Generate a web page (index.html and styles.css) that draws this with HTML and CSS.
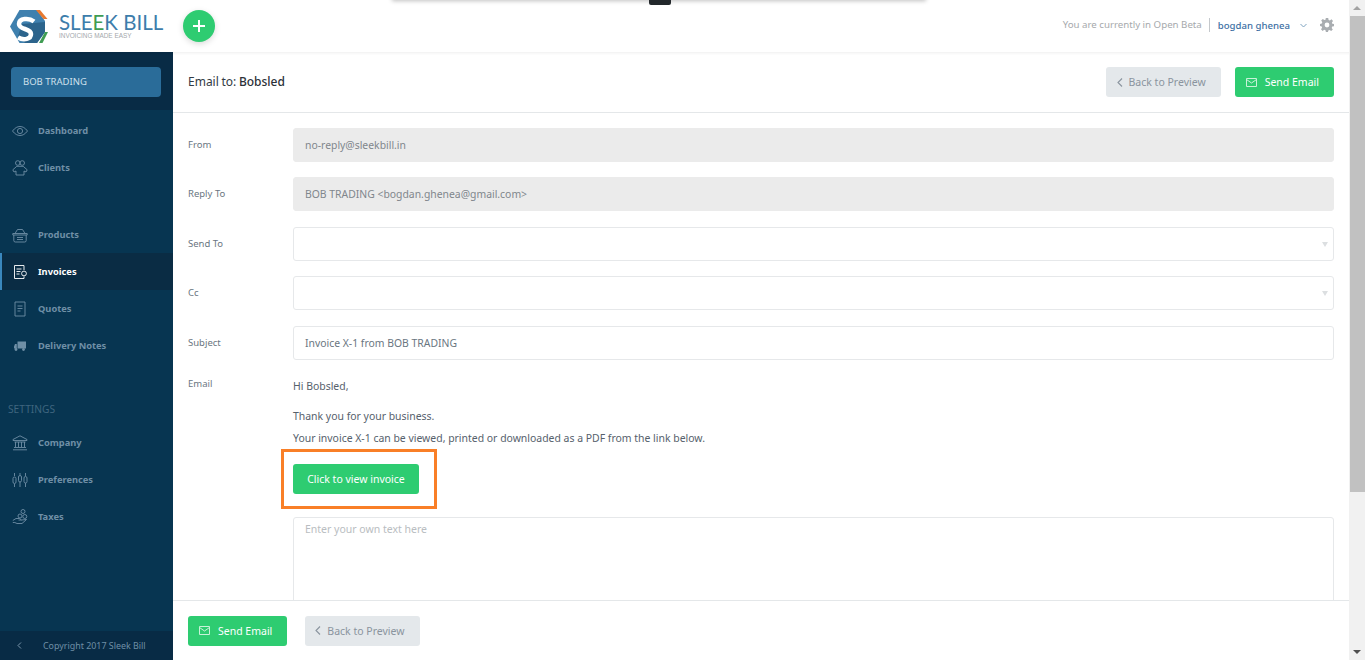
FILE: index.html
```html
<!DOCTYPE html>
<html lang="en">
<head>
<meta charset="utf-8">
<title>Sleek Bill</title>
<link rel="stylesheet" href="styles.css">
</head>
<body>
<div class="page">
  <header class="topbar">
    <div class="logo">
      <svg class="logo-mark" width="38" height="33" viewBox="0 0 38 33">
        <path d="M9.500 0H27L35 11V22L27 33H9.500L0 16.500Z" fill="#3f80ae"/>
        <path d="M12 14 35 12V22L27 33H15L8 26Z" fill="#2c648c"/>
        <path d="M26 0H30L37.500 9H33.500Z" fill="#e8792f"/>
        <path d="M29 33H32.500L38 22H35Z" fill="#3f9c52"/>
        <path d="M24 11.500C19 7.500 9 8 9 14C9 20 21 18 21 24C21 29 14 31 8 27.500" fill="none" stroke="#fff" stroke-width="4.500"/>
      </svg>
      <div class="logo-text">
        <div class="logo-name">SLE<span class="logo-e">E</span>K BILL</div>
        <div class="logo-tag">INVOICING MADE EASY</div>
      </div>
    </div>
    <div class="add-btn"><svg width="14" height="14" viewBox="0 0 14 14"><path d="M7 1V13M1 7H13" stroke="#fff" stroke-width="2"/></svg></div>
    <div class="top-right">
      <span class="beta">You are currently in Open Beta</span>
      <span class="user">bogdan ghenea</span>
      <svg class="user-caret" width="7" height="5" viewBox="0 0 7 5"><path d="M.5 1 3.500 4 6.500 1" fill="none" stroke="#7fa3c0" stroke-width="1"/></svg>
      <svg class="gear" width="14" height="14" viewBox="0 0 14 14"><path fill="#a9adb1" fill-rule="evenodd" d="M5.800 0H8.200L8.600 1.900 9.900 2.400 11.500 1.300 13 3 11.900 4.500 12.300 5.800 14 6V8.200L12.200 8.600 11.700 9.900 12.800 11.500 11.200 13 9.600 11.900 8.300 12.400 8 14H5.900L5.500 12.300 4.200 11.800 2.600 12.900 1 11.300 2.100 9.700 1.700 8.400 0 8V5.900L1.800 5.500 2.300 4.200 1.200 2.600 2.800 1 4.400 2.100 5.500 1.700ZM7 4.600A2.400 2.400 0 1 0 7 9.400 2.400 2.400 0 1 0 7 4.600Z"/></svg>
    </div>
  </header>
  <div class="body-row">
    <aside class="sidebar">
      <div class="company-box"><div class="company-btn">BOB TRADING</div></div>
      <nav class="nav nav-first">
        <a class="nav-item"><svg class="ico" width="16" height="16" viewBox="0 0 16 16"><path d="M.5 8C3 4.700 5.500 3.500 8 3.500S13 4.700 15.500 8C13 11.300 10.500 12.500 8 12.500S3 11.300.5 8Z"/><circle cx="8" cy="8" r="2.600"/></svg>Dashboard</a>
        <a class="nav-item"><svg class="ico" width="16" height="16" viewBox="0 0 16 16"><circle cx="5.800" cy="3" r="2.300"/><circle cx="10.200" cy="3" r="2.300"/><path d="M4 15V11L2 12 .8 9.800 4.800 6.300H11.200L15.200 9.800 14 12 12 11V15Z"/></svg>Clients</a>
        <div class="nav-gap"></div>
        <a class="nav-item"><svg class="ico" width="16" height="16" viewBox="0 0 16 16"><path d="M.8 6.500H15.200V8H.8ZM1.800 8V13.500Q1.800 15 3.300 15H12.700Q14.200 15 14.200 13.500V8M3 6.500 5.500 2.500H10.500L13 6.500M5 10.500H11M5 12.500H11" /></svg>Products</a>
        <a class="nav-item active"><svg class="ico" width="16" height="16" viewBox="0 0 16 16"><path d="M12 6V1.500H2.500V14.500H12V12.500M4.500 5H9.500M4.500 7.500H8.500M4.500 10H7.500"/><circle cx="12" cy="9.500" r="2.400"/></svg>Invoices</a>
        <a class="nav-item"><svg class="ico" width="16" height="16" viewBox="0 0 16 16"><path d="M3 1H13V15H3ZM5.500 5H10.500M5.500 7.500H10.500M5.500 10H8.500"/></svg>Quotes</a>
        <a class="nav-item"><svg class="ico ico-fill" width="16" height="16" viewBox="0 0 16 16"><path d="M5.500 3.500H14V10.500H5.500ZM4.800 6V10.500H2V8.500L3 6Z"/><circle cx="4" cy="11.500" r="1.400"/><circle cx="11.500" cy="11.500" r="1.400"/></svg>Delivery Notes</a>
      </nav>
      <div class="nav-title">SETTINGS</div>
      <nav class="nav">
        <a class="nav-item"><svg class="ico" width="16" height="16" viewBox="0 0 16 16"><path d="M8 .8 15 4.500V5.500H1V4.500ZM2.500 7H13.500M3.500 7V12M6.500 7V12M9.500 7V12M12.500 7V12M2 12.500H14M1 14.800H15"/></svg>Company</a>
        <a class="nav-item"><svg class="ico" width="16" height="16" viewBox="0 0 16 16"><path d="M2.500 1V4M2.500 12V15M8 1V3M8 10V15M13.500 1V4M13.500 11V15"/><rect x="1" y="5" width="3" height="6.500" rx="1.500"/><rect x="6.500" y="3.500" width="3" height="6.500" rx="1.500"/><rect x="12" y="4.500" width="3" height="6.500" rx="1.500"/></svg>Preferences</a>
        <a class="nav-item"><svg class="ico" width="16" height="16" viewBox="0 0 16 16"><circle cx="11" cy="2.500" r="2"/><circle cx="8" cy="7" r="2"/><circle cx="12.800" cy="7.500" r="2"/><path d="M.8 11.500 4 9.500H7.500L9.500 11H6.500M9.500 11 14.500 10.500 10 14.500H5L2.800 13.500H.8"/></svg>Taxes</a>
      </nav>
      <div class="side-foot"><svg class="foot-arrow" width="5" height="7" viewBox="0 0 5 7"><path d="M4 .5 1 3.500 4 6.500" fill="none" stroke="#7b97ac"/></svg>Copyright 2017 Sleek Bill</div>
    </aside>
    <main class="main">
      <div class="title-bar">
        <div class="title">Email to: <span class="title-name">Bobsled</span></div>
        <div class="actions">
          <a class="btn btn-grey"><svg class="chev" width="6" height="9" viewBox="0 0 6 9"><path d="M5 .5 1 4.500 5 8.500" fill="none" stroke="#8a949e" stroke-width="1.100"/></svg>Back to Preview</a>
          <a class="btn btn-green"><svg class="mail" width="11" height="9" viewBox="0 0 11 9"><path d="M.5.500H10.500V8.500H.5ZM.5 1.500 5.500 5 10.500 1.500" fill="none" stroke="#c9f2d9"/></svg>Send Email</a>
        </div>
      </div>
      <div class="form">
        <div class="row"><label class="lab">From</label><div class="field ro">no-reply@sleekbill.in</div></div>
        <div class="row"><label class="lab">Reply To</label><div class="field ro">BOB TRADING &lt;bogdan.ghenea@gmail.com&gt;</div></div>
        <div class="row"><label class="lab">Send To</label><div class="field sel"><span class="caret"></span></div></div>
        <div class="row"><label class="lab">Cc</label><div class="field sel"><span class="caret"></span></div></div>
        <div class="row"><label class="lab">Subject</label><div class="field">Invoice X-1 from BOB TRADING</div></div>
        <div class="row row-email">
          <label class="lab lab-email">Email</label>
          <div class="email">
            <p class="p-hi">Hi Bobsled,</p>
            <p class="p-thanks">Thank you for your business.</p>
            <p class="p-inv">Your invoice X-1 can be viewed, printed or downloaded as a PDF from the link below.</p>
            <div class="cta-wrap">
              <a class="cta">Click to view invoice</a>
              <div class="highlight"></div>
            </div>
            <div class="textarea">Enter your own text here</div>
          </div>
        </div>
      </div>
      <div class="bottom-bar">
        <a class="btn btn-green"><svg class="mail" width="11" height="9" viewBox="0 0 11 9"><path d="M.5.500H10.500V8.500H.5ZM.5 1.500 5.500 5 10.500 1.500" fill="none" stroke="#c9f2d9"/></svg>Send Email</a>
        <a class="btn btn-grey"><svg class="chev" width="6" height="9" viewBox="0 0 6 9"><path d="M5 .5 1 4.500 5 8.500" fill="none" stroke="#8a949e" stroke-width="1.100"/></svg>Back to Preview</a>
      </div>
    </main>
    <div class="scrollbar">
      <div class="sb-up"></div>
      <div class="sb-thumb"></div>
      <div class="sb-track"></div>
      <div class="sb-down"></div>
    </div>
  </div>
  <div class="popup"><div class="popup-tab"></div></div>
</div>
</body>
</html>
```
FILE: styles.css
```css
* { box-sizing: border-box; }
html, body { margin: 0; height: 100%; overflow: hidden; }
body { font-family: "Noto Sans", "Open Sans", sans-serif; color: #4d5a66; background: #fff; }
.page { position: relative; width: 1365px; height: 660px; display: flex; flex-direction: column; overflow: hidden; }

.topbar { height: 52px; flex: none; display: flex; align-items: center; background: #fff; position: relative; z-index: 2; box-shadow: 0 1px 3px rgba(0,0,0,.07); padding-left: 10px; padding-right: 31px; }
.logo { display: flex; align-items: center; width: 173px; }
.logo-mark { flex: none; }
.logo-text { margin-left: 11px; margin-top: -1px; }
.logo-name { font-family: "Lato", sans-serif; font-size: 20.500px; font-weight: 400; line-height: 19px; color: #3d7dab; letter-spacing: 0; white-space: nowrap; }
.logo-e { color: #3f9c52; }
.logo-tag { font-family: "Liberation Sans", sans-serif; font-size: 6.400px; line-height: 7px; color: #a3a7ab; white-space: nowrap; }
.add-btn { width: 32px; height: 32px; border-radius: 50%; background: #2ecc71; display: flex; align-items: center; justify-content: center; box-shadow: 0 2px 6px rgba(0,0,0,.15); }
.top-right { margin-left: auto; display: flex; align-items: center; font-size: 9.700px; margin-top: -2px; }
.beta { color: #a6a9ac; padding-right: 7px; border-right: 1px solid #c4c8cc; line-height: 14px; }
.user { color: #3d6fa3; margin-left: 8px; font-size: 9.600px; font-weight: 500; }
.user-caret { margin-left: 10px; }
.gear { margin-left: 13px; }

.body-row { flex: 1; display: flex; min-height: 0; }
.sidebar { width: 173px; flex: none; background: #073551; display: flex; flex-direction: column; }
.company-box { height: 58px; flex: none; background: #082b45; padding: 15px 12px 13px 11px; }
.company-btn { height: 30px; background: #2a6c99; border-radius: 4px; color: #cfe0ec; font-size: 9.500px; line-height: 29px; padding-left: 12px; }
.nav { display: flex; flex-direction: column; }
.nav-first { margin-top: 2px; }
.nav-item { height: 37px; display: flex; align-items: center; padding-left: 10px; color: #6f8fa6; font-size: 9.300px; font-weight: 700; border-left: 2px solid transparent; }
.nav-item .ico { margin-right: 10px; fill: none; stroke: #6f8fa6; stroke-width: .9; flex: none; }
.nav-item .ico-fill { fill: #6f8fa6; stroke: none; }
.nav-gap { height: 30px; }
.nav-item.active { background: #0a2c44; color: #fff; border-left-color: #3a87bd; }
.nav-item.active .ico { stroke: #fff; }
.nav-title { margin-top: 36px; height: 18px; font-size: 10.200px; line-height: 18px; color: #3f657f; padding-left: 8px; margin-bottom: 6px; }
.side-foot { margin-top: auto; height: 29px; background: #082b45; color: #6f8fa6; font-size: 8.900px; line-height: 29px; display: flex; align-items: center; }
.foot-arrow { margin-left: 17px; margin-right: 21px; flex: none; }

.main { flex: 1; min-width: 0; display: flex; flex-direction: column; background: #fff; }
.title-bar { height: 61px; flex: none; display: flex; align-items: center; justify-content: space-between; padding: 0 15px; border-bottom: 1px solid #e4e7e9; }
.title { font-size: 12px; color: #333b44; padding-bottom: 2px; word-spacing: -.5px; }
.title-name { color: #2b3138; font-weight: 500; }
.actions { display: flex; gap: 14px; }
.btn { height: 30px; display: flex; align-items: center; border-radius: 3px; font-size: 10.500px; white-space: nowrap; }
.btn-grey { background: #e4e8eb; color: #8a949e; padding: 0 15px 0 11px; }
.btn-green { background: #2ecc71; color: #fff; padding: 0 15px 0 11px; }
.chev { margin-right: 6px; }
.mail { margin-right: 8px; }

.form { flex: 1; min-height: 0; overflow: hidden; padding: 14.900px 15px 0 15px; display: flex; flex-direction: column; gap: 15.500px; }
.row { display: flex; }
.lab { width: 105px; flex: none; font-size: 9.500px; color: #6a7681; line-height: 33px; }
.field { flex: 1; height: 34px; border: 1px solid #e6e8ea; border-radius: 3px; font-size: 10.400px; line-height: 32px; padding-left: 11px; color: #6a7681; position: relative; }
.ro { background: #ebebeb; border-color: #ebebeb; color: #80868c; }
.caret { position: absolute; right: 5px; top: 14px; border: 3px solid transparent; border-top: 5px solid #dcdfe1; border-bottom: 0; }
.row-email { margin-top: .6px; }
.lab-email { line-height: 14px; margin-top: 1px; }
.email { flex: 1; font-size: 10.450px; color: #56616c; min-width: 0; }
.email p { margin: 0; line-height: 14px; }
.p-hi { margin-top: 3px !important; }
.p-thanks { margin-top: 16px !important; }
.p-inv { margin-top: 8px !important; }
.cta-wrap { position: relative; margin-top: 19px; height: 30px; }
.cta { display: block; width: 126px; height: 30px; background: #2ecc71; border-radius: 3px; color: #fff; font-size: 10.500px; line-height: 30px; text-align: center; }
.highlight { position: absolute; left: -12px; top: -15px; width: 156px; height: 60px; border: 3px solid #f97f27; }
.textarea { margin-top: 23px; height: 200px; border: 1px solid #e6e8ea; border-radius: 3px; padding: 4px 11px; font-size: 10.500px; line-height: 14px; color: #b9bdc1; }

.bottom-bar { height: 60px; flex: none; background: #fff; border-top: 1px solid #e4e7e9; display: flex; align-items: center; gap: 18px; padding: 0 15px; position: relative; z-index: 1; }
.bottom-bar .btn-grey { padding-left: 10px; }

.scrollbar { width: 16px; flex: none; background: #f1f1f1; display: flex; flex-direction: column; margin-top: -52px; position: relative; z-index: 3; }
.sb-up { height: 16px; flex: none; position: relative; }
.sb-up::after { content: ""; position: absolute; left: 4px; top: 6px; border: 4px solid transparent; border-top: 0; border-bottom: 4px solid #a3a3a3; }
.sb-thumb { height: 476px; flex: none; background: #c1c1c1; margin-left: 1px; }
.sb-track { flex: 1; }
.sb-down { height: 16px; flex: none; position: relative; }
.sb-down::after { content: ""; position: absolute; left: 4px; top: 6px; border: 4px solid transparent; border-bottom: 0; border-top: 4px solid #505050; }

.popup { position: absolute; left: 393px; top: -4px; width: 532px; height: 4px; background: #fff; box-shadow: 0 0 4px 1px rgba(0,0,0,.25); z-index: 5; }
.popup-tab { position: absolute; left: 256px; top: 4px; width: 22px; height: 5px; background: #22272b; border-radius: 0 0 2px 2px; }
```
